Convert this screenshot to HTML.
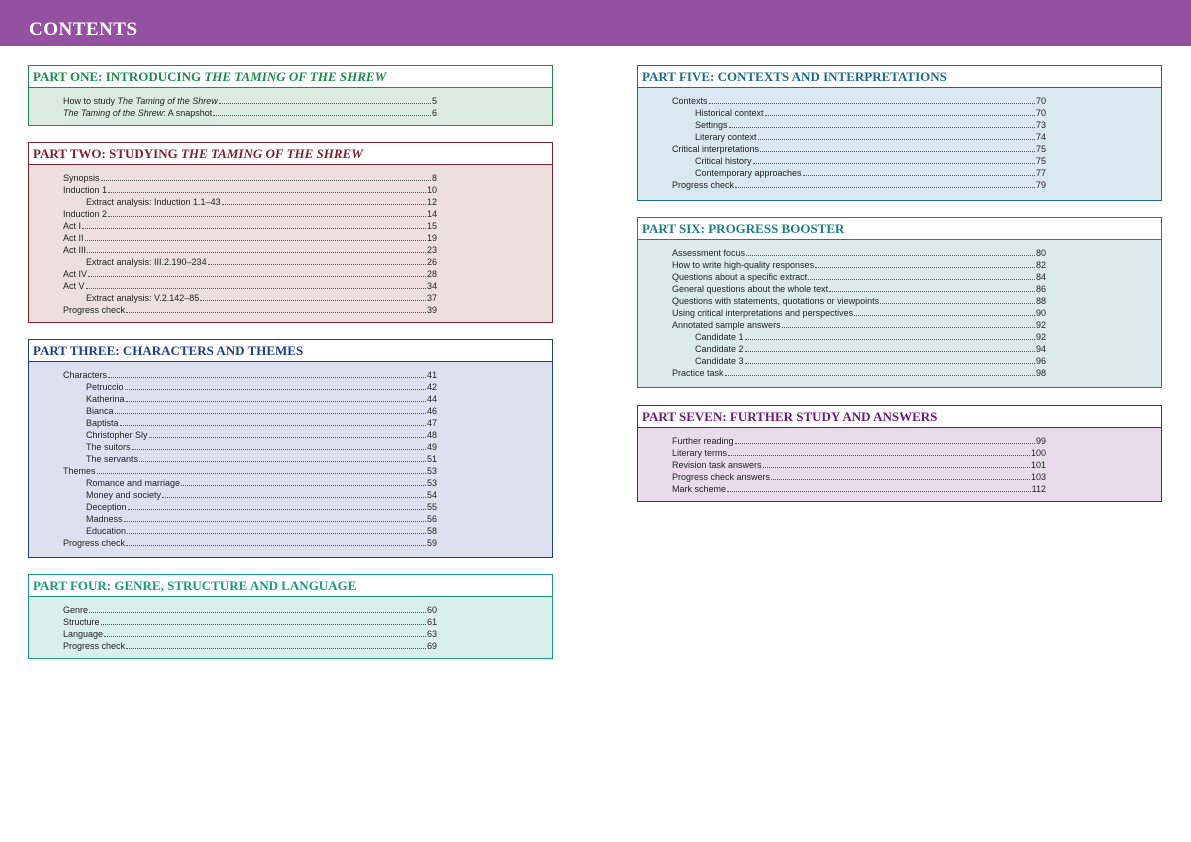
<!DOCTYPE html><html><head><meta charset="utf-8"><style>
*{margin:0;padding:0;box-sizing:border-box}
body{width:1191px;height:842px;background:#fff;position:relative;font-family:"Liberation Sans",sans-serif;overflow:hidden}
.hdr{position:absolute;left:0;top:0;width:1191px;height:46px;background:#9551a1}
.hdr span{position:absolute;left:29px;top:19px;font-family:"Liberation Serif",serif;font-weight:bold;font-size:19px;color:#fff;letter-spacing:0.5px}
.box{position:absolute;width:525px;border:1.3px solid}
.t{height:22px;background:#fff;border-bottom:1.3px solid;font-family:"Liberation Serif",serif;font-weight:bold;font-size:13px;padding:3px 0 0 4px;white-space:nowrap}
.b{padding:7px 0 5px 34px}
.r{display:flex;width:374px;height:12px;font-size:9px;line-height:12px;color:#222;align-items:baseline}
.r.s{padding-left:23px}
.r .d{flex:1;border-bottom:1px dotted #555;margin:0 1px;height:8px}
</style></head><body>
<div class="hdr"><span>CONTENTS</span></div>

<div class="box" style="left:28px;top:65px;height:61px;border-color:#1e8a4e;background:#dbebe1"><div class="t" style="color:#1e8a4e;border-color:#1e8a4e">PART ONE: INTRODUCING <i>THE TAMING OF THE SHREW</i></div><div class="b">
<div class="r"><span>How to study <i>The Taming of the Shrew</i></span><span class="d"></span><span>5</span></div>
<div class="r"><span><i>The Taming of the Shrew</i>: A snapshot</span><span class="d"></span><span>6</span></div>
</div></div>

<div class="box" style="left:28px;top:142px;height:181px;border-color:#7c2230;background:#ecdfdf"><div class="t" style="color:#7c2230;border-color:#7c2230">PART TWO: STUDYING <i>THE TAMING OF THE SHREW</i></div><div class="b">
<div class="r"><span>Synopsis</span><span class="d"></span><span>8</span></div>
<div class="r"><span>Induction 1</span><span class="d"></span><span>10</span></div>
<div class="r s"><span>Extract analysis: Induction 1.1–43</span><span class="d"></span><span>12</span></div>
<div class="r"><span>Induction 2</span><span class="d"></span><span>14</span></div>
<div class="r"><span>Act I</span><span class="d"></span><span>15</span></div>
<div class="r"><span>Act II</span><span class="d"></span><span>19</span></div>
<div class="r"><span>Act III</span><span class="d"></span><span>23</span></div>
<div class="r s"><span>Extract analysis: III.2.190–234</span><span class="d"></span><span>26</span></div>
<div class="r"><span>Act IV</span><span class="d"></span><span>28</span></div>
<div class="r"><span>Act V</span><span class="d"></span><span>34</span></div>
<div class="r s"><span>Extract analysis: V.2.142–85</span><span class="d"></span><span>37</span></div>
<div class="r"><span>Progress check</span><span class="d"></span><span>39</span></div>
</div></div>

<div class="box" style="left:28px;top:339px;height:219px;border-color:#1f3e86;background:#dde1ef"><div class="t" style="color:#1f3e86;border-color:#1f3e86">PART THREE: CHARACTERS AND THEMES</div><div class="b">
<div class="r"><span>Characters</span><span class="d"></span><span>41</span></div>
<div class="r s"><span>Petruccio</span><span class="d"></span><span>42</span></div>
<div class="r s"><span>Katherina</span><span class="d"></span><span>44</span></div>
<div class="r s"><span>Bianca</span><span class="d"></span><span>46</span></div>
<div class="r s"><span>Baptista</span><span class="d"></span><span>47</span></div>
<div class="r s"><span>Christopher Sly</span><span class="d"></span><span>48</span></div>
<div class="r s"><span>The suitors</span><span class="d"></span><span>49</span></div>
<div class="r s"><span>The servants</span><span class="d"></span><span>51</span></div>
<div class="r"><span>Themes</span><span class="d"></span><span>53</span></div>
<div class="r s"><span>Romance and marriage</span><span class="d"></span><span>53</span></div>
<div class="r s"><span>Money and society</span><span class="d"></span><span>54</span></div>
<div class="r s"><span>Deception</span><span class="d"></span><span>55</span></div>
<div class="r s"><span>Madness</span><span class="d"></span><span>56</span></div>
<div class="r s"><span>Education</span><span class="d"></span><span>58</span></div>
<div class="r"><span>Progress check</span><span class="d"></span><span>59</span></div>
</div></div>

<div class="box" style="left:28px;top:574px;height:85px;border-color:#1a9a80;background:#d8efea"><div class="t" style="color:#1a9a80;border-color:#1a9a80">PART FOUR: GENRE, STRUCTURE AND LANGUAGE</div><div class="b">
<div class="r"><span>Genre</span><span class="d"></span><span>60</span></div>
<div class="r"><span>Structure</span><span class="d"></span><span>61</span></div>
<div class="r"><span>Language</span><span class="d"></span><span>63</span></div>
<div class="r"><span>Progress check</span><span class="d"></span><span>69</span></div>
</div></div>

<div class="box" style="left:637px;top:65px;height:136px;border-color:#1c6b88;background:#d9e8ef"><div class="t" style="color:#1c6b88;border-color:#1c6b88">PART FIVE: CONTEXTS AND INTERPRETATIONS</div><div class="b">
<div class="r"><span>Contexts</span><span class="d"></span><span>70</span></div>
<div class="r s"><span>Historical context</span><span class="d"></span><span>70</span></div>
<div class="r s"><span>Settings</span><span class="d"></span><span>73</span></div>
<div class="r s"><span>Literary context</span><span class="d"></span><span>74</span></div>
<div class="r"><span>Critical interpretations</span><span class="d"></span><span>75</span></div>
<div class="r s"><span>Critical history</span><span class="d"></span><span>75</span></div>
<div class="r s"><span>Contemporary approaches</span><span class="d"></span><span>77</span></div>
<div class="r"><span>Progress check</span><span class="d"></span><span>79</span></div>
</div></div>

<div class="box" style="left:637px;top:217px;height:171px;border-color:#1e7f7e;background:#dcebea"><div class="t" style="color:#1e7f7e;border-color:#1e7f7e">PART SIX: PROGRESS BOOSTER</div><div class="b">
<div class="r"><span>Assessment focus</span><span class="d"></span><span>80</span></div>
<div class="r"><span>How to write high-quality responses</span><span class="d"></span><span>82</span></div>
<div class="r"><span>Questions about a specific extract</span><span class="d"></span><span>84</span></div>
<div class="r"><span>General questions about the whole text</span><span class="d"></span><span>86</span></div>
<div class="r"><span>Questions with statements, quotations or viewpoints</span><span class="d"></span><span>88</span></div>
<div class="r"><span>Using critical interpretations and perspectives</span><span class="d"></span><span>90</span></div>
<div class="r"><span>Annotated sample answers</span><span class="d"></span><span>92</span></div>
<div class="r s"><span>Candidate 1</span><span class="d"></span><span>92</span></div>
<div class="r s"><span>Candidate 2</span><span class="d"></span><span>94</span></div>
<div class="r s"><span>Candidate 3</span><span class="d"></span><span>96</span></div>
<div class="r"><span>Practice task</span><span class="d"></span><span>98</span></div>
</div></div>

<div class="box" style="left:637px;top:405px;height:97px;border-color:#6a1b78;background:#e8dbea"><div class="t" style="color:#6a1b78;border-color:#6a1b78">PART SEVEN: FURTHER STUDY AND ANSWERS</div><div class="b">
<div class="r"><span>Further reading</span><span class="d"></span><span>99</span></div>
<div class="r"><span>Literary terms</span><span class="d"></span><span>100</span></div>
<div class="r"><span>Revision task answers</span><span class="d"></span><span>101</span></div>
<div class="r"><span>Progress check answers</span><span class="d"></span><span>103</span></div>
<div class="r"><span>Mark scheme</span><span class="d"></span><span>112</span></div>
</div></div>
</body></html>
